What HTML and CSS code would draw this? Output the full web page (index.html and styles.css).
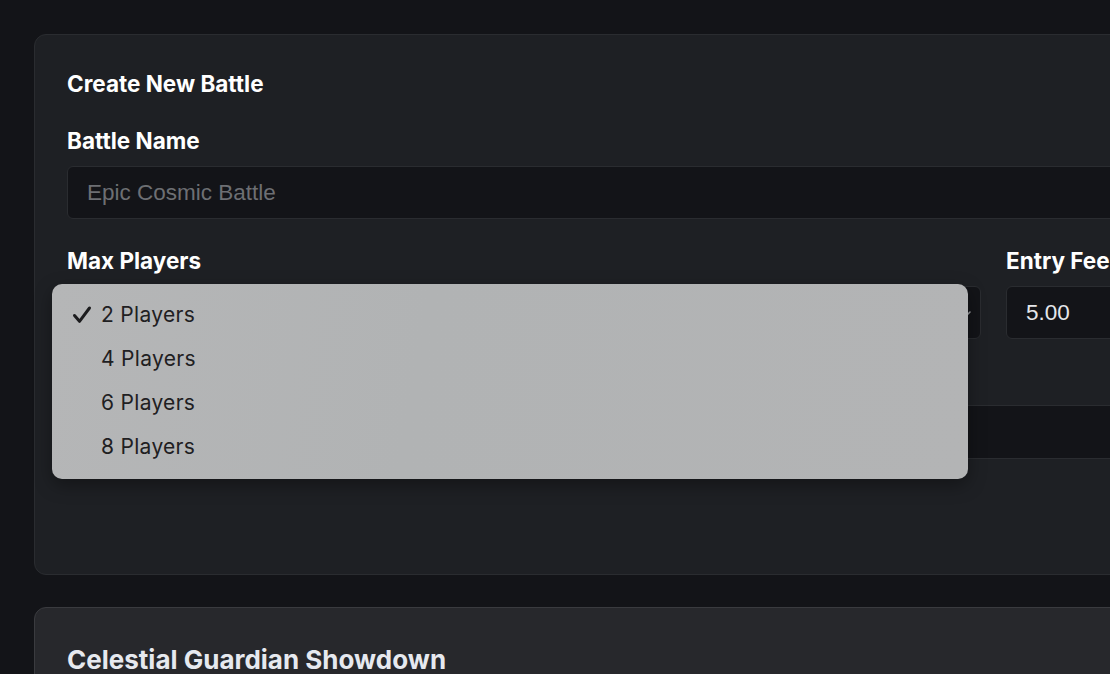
FILE: index.html
```html
<!DOCTYPE html>
<html lang="en">
<head>
<meta charset="utf-8">
<title>Create New Battle</title>
<link rel="stylesheet" href="styles.css">
</head>
<body>
<main class="page">
  <section class="card create-card">
    <h2 class="card-title">Create New Battle</h2>
    <div class="field first">
      <label class="label">Battle Name</label>
      <div class="input placeholder">Epic Cosmic Battle</div>
    </div>
    <div class="row">
      <div class="field select-field">
        <label class="label">Max Players</label>
        <div class="input select">
          <svg class="chevron" width="14" height="14" viewBox="0 0 14 14"><path d="M2 5l5 5 5-5" fill="none" stroke="#9a9ca0" stroke-width="1.6" stroke-linecap="round" stroke-linejoin="round"/></svg>
        </div>
        <div class="menu">
          <div class="option"><svg class="check" width="22" height="22" viewBox="0 0 22 22"><path d="M3.5 11.5l5 5.8L18.5 4" fill="none" stroke="#1c1c1e" stroke-width="3" stroke-linecap="round" stroke-linejoin="round"/></svg><span>2 Players</span></div>
          <div class="option"><span>4 Players</span></div>
          <div class="option"><span>6 Players</span></div>
          <div class="option"><span>8 Players</span></div>
        </div>
      </div>
      <div class="field">
        <label class="label">Entry Fee</label>
        <div class="input value">5.00</div>
      </div>
    </div>
    <div class="field third">
      <div class="label-space"></div>
      <div class="input tall"></div>
    </div>
  </section>
  <section class="card battle-card">
    <h2 class="battle-title">Celestial Guardian Showdown</h2>
  </section>
</main>
</body>
</html>
```
FILE: styles.css
```css
html, body {
  margin: 0;
  padding: 0;
  overflow: hidden;
  background: #131418;
  width: 1110px;
  height: 674px;
}
body {
  font-family: Inter, "Noto Sans", sans-serif;
  color: #ffffff;
}
.page {
  padding: 34px 0 0 34px;
  width: 1500px;
  display: flex;
  flex-direction: column;
  gap: 32px;
}
.card {
  border-radius: 12px;
  box-sizing: border-box;
}
.create-card {
  background: #1e2024;
  border: 1px solid #2a2c30;
  padding: 32px 32px 0 32px;
  height: 541px;
}
.card-title {
  margin: 3px 0 0 0;
  font-size: 22.5px;
  line-height: 28px;
  font-weight: 700;
  color: #ffffff;
}
.field {
  display: flex;
  flex-direction: column;
}
.field.first {
  margin-top: 29px;
}
.label {
  font-size: 22.5px;
  line-height: 28px;
  font-weight: 700;
  color: #ffffff;
  margin-bottom: 11px;
}
.label-space {
  height: 28px;
  margin-bottom: 11px;
}
.input {
  height: 53px;
  box-sizing: border-box;
  background: #131418;
  border: 1px solid #2a2c30;
  border-radius: 6px;
  padding: 0 19px;
  display: flex;
  align-items: center;
  font-family: "Liberation Sans", Arial, sans-serif;
  font-size: 22.5px;
  color: #e5e7eb;
}
.placeholder {
  color: #6d6f73;
}
.row {
  margin-top: 28px;
  display: grid;
  grid-template-columns: 914px 1fr;
  column-gap: 25px;
}
.row .input {
  height: 53px;
}
.value {
  color: #e5e7eb;
}
.select-field {
  position: relative;
}
.select {
  justify-content: flex-end;
  padding-right: 8px;
}
.chevron {
  margin-top: 2px;
}
.field.third {
  margin-top: 27px;
}
.input.tall {
  height: 54px;
}
.menu {
  position: absolute;
  left: -15px;
  top: 37px;
  width: 916px;
  box-sizing: border-box;
  padding: 8px 0 11px 0;
  border-radius: 10px;
  background: linear-gradient(100deg, #b5b6b7 0%, #b1b3b4 40%, #b3b4b5 100%);
  box-shadow: 0 6px 18px rgba(0, 0, 0, 0.35);
  z-index: 10;
}
.option {
  height: 44px;
  display: flex;
  align-items: center;
  padding-left: 49px;
  position: relative;
  font-family: Inter, "Noto Sans", sans-serif;
  font-size: 21px;
  color: #1f2022;
  letter-spacing: 0.3px;
}
.check {
  position: absolute;
  left: 19px;
  top: 12px;
}
.battle-card {
  background: #27282c;
  border: 1px solid #3a3b3f;
  padding: 36px 32px;
  height: 200px;
}
.battle-title {
  margin: 0;
  font-size: 26px;
  line-height: 32px;
  font-weight: 700;
  color: #e6e9ef;
}
```
